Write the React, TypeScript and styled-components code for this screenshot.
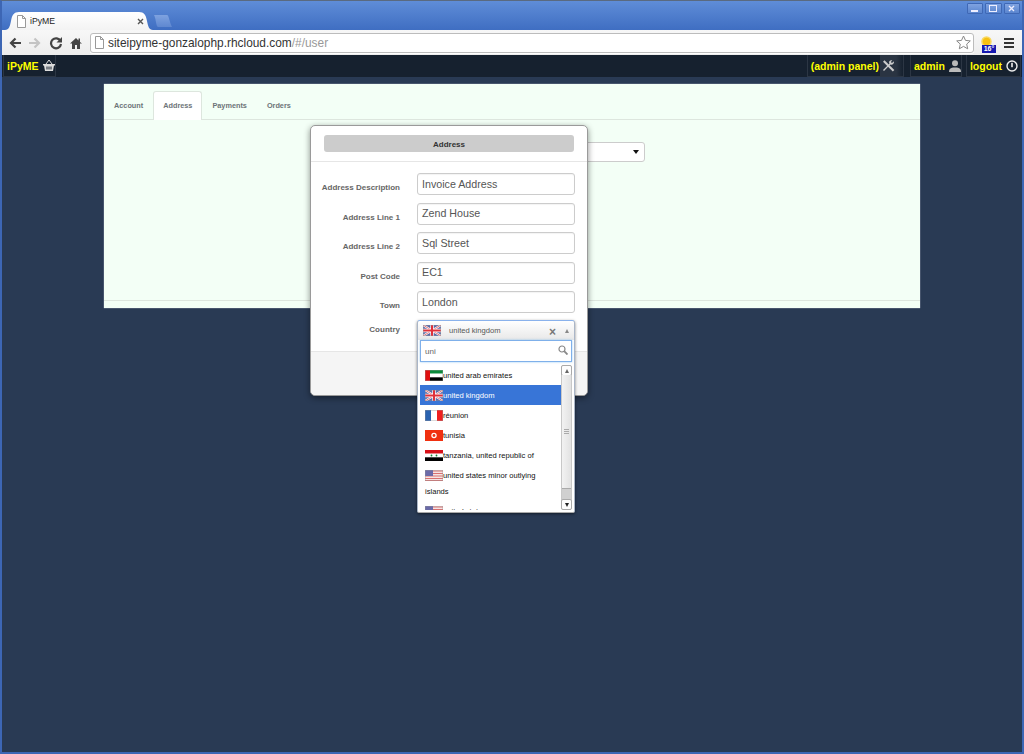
import React from "react";
import styled, { createGlobalStyle } from "styled-components";

const Global = createGlobalStyle`
  html, body { margin: 0; padding: 0; background: #293a54; }
  body { font-family: "Liberation Sans", Arial, sans-serif; overflow: hidden; }
  * { box-sizing: border-box; }
`;

const Win = styled.div`
  position: relative; width: 1024px; height: 754px; display: flex; flex-direction: column;
  background: #293a54; border-style: solid; border-color: #5a6a80 #3d66b4 #3d66b4 #3d66b4; border-width: 1px 2px 2px 2px; overflow: hidden;
`;
const TitleBar = styled.div`
  height: 29px; flex: none; display: flex; align-items: flex-end; margin: 0 -2px;
  padding-left: 5px; background: linear-gradient(#5f8dd8, #3f6ec2);
  position: relative;
`;
const Tab = styled.div`
  width: 148px; height: 18px; background: linear-gradient(#ffffff, #f3f3f3);
  clip-path: path("M0 18 C4 18 5 14 6 9 C7 3 9 0 14 0 L134 0 C139 0 141 3 142 9 C143 14 144 18 148 18 Z");
  display: flex; align-items: center; padding: 0 9px 0 11px; font-size: 8.7px; color: #222; gap: 3px;
`;
const TabTitle = styled.span` flex: 1; `;
const NewTab = styled.div`
  width: 18px; height: 12px; margin: 0 0 3px 1px; background: linear-gradient(#7ea2e0, #5f88d0);
  clip-path: path("M0 0 L13 0 C15 0 15 6 18 12 L4 12 C2 12 2 3 0 0 Z");
`;
const WinControls = styled.div`
  position: absolute; top: 2px; right: 4px; display: flex; gap: 2px;
`;
const WinButton = styled.div`
  width: 16.5px; height: 11px; background: linear-gradient(#7fa2e0, #5a85cf); border: 1px solid #3f68b5; border-radius: 1px;
  display: flex; align-items: center; justify-content: center;
`;
const Toolbar = styled.div`
  height: 25px; flex: none; margin: 0 -2px; background: linear-gradient(#f7f7f7, #ededed); display: flex; align-items: center; padding: 0 5px 0 5px;
`;
const NavIcon = styled.div`
  width: 20px; height: 20px; display: flex; align-items: center; justify-content: center;
`;
const ReloadIcon = styled(NavIcon)` margin-left: 1px; `;
const Omni = styled.div`
  flex: 1; height: 20px; margin-left: 4px; background: #fff; border: 1px solid #bcbcbc; border-radius: 3px; display: flex; align-items: center; padding: 0 2px 0 3px; font-size: 11.9px; color: #333; gap: 3px; min-width: 0; box-shadow: 0 1px 0 #fff;
`;
const UrlGray = styled.span` color: #999; `;
const UrlText = styled.span` flex: 1; `;
const Ext = styled.div<{ $ml: number }>`
  width: 20px; height: 20px; margin-left: ${p => p.$ml}px; display: flex; align-items: center; justify-content: center; position: relative;
`;
const Badge = styled.span`
  position: absolute; left: 5px; bottom: 0; width: 14px; height: 8px; background: #1418b0; color: #fff; font-size: 7px; line-height: 8px; font-weight: bold; text-align: center;
`;
const Nav = styled.div`
  height: 22px; flex: none; margin: 0 -2px; background: #16212f; display: flex; align-items: stretch; padding: 0 3px 0 3px;
`;
const NavItem = styled.div<{ $ml?: number; $pr?: number; $pl?: number }>`
  display: flex; align-items: center; gap: 4px; padding: 0 ${p => p.$pr ?? 2}px 0 ${p => p.$pl ?? 3}px; margin-left: ${p => p.$ml ?? 0}px;
  border-left: 1px solid #2c3644; border-right: 1px solid #2c3644;
  color: #ffff00; font-size: 10.5px; font-weight: bold; white-space: nowrap; height: 22px;
  border-bottom: 1px solid #2c3644;
`;
const HoverIcon = styled.span`
  display: flex; align-items: center; padding-left: 2px; background: linear-gradient(90deg, #2a3442 70%, #16212f); height: 100%; width: 23px; margin: 0 -2px 0 -3px;
`;
const Spacer = styled.div` flex: 1; `;
const Page = styled.div`
  flex: 1; padding: 7px 102px 0 102px; min-height: 0;
`;
const Card = styled.div`
  width: 816px; height: 224px; background: #f3fff6; display: flex; flex-direction: column; box-shadow: 0 0 1px #dde;
`;
const Tabs = styled.div`
  height: 29px; margin-top: 7px; display: flex; border-bottom: 1px solid #dde6de; flex: none;
`;
const TabLink = styled.div<{ $active?: boolean }>`
  height: ${p => (p.$active ? 29 : 28)}px; padding: ${p => (p.$active ? 0 : 1)}px ${p => (p.$active ? 9 : 10)}px 0; font-size: 7.3px; font-weight: bold; color: #6d7478; display: flex; align-items: center; line-height: 1;
  ${p => p.$active && `background:#fff; border:1px solid #dde6de; border-bottom:none; border-radius:3px 3px 0 0;`}
`;
const CardBody = styled.div`
  flex: 1; position: relative; padding: 22px 0 0 246px;
`;
const BehindSelect = styled.div`
  width: 295px; height: 20px; background: #fff; border: 1px solid #ccc; border-radius: 3px; display: flex; align-items: center; justify-content: flex-end; padding-right: 5px;
`;
const Arrow = styled.span`
  width: 0; height: 0; border-left: 3px solid transparent; border-right: 3px solid transparent; border-top: 4px solid #111;
`;
const CardFooter = styled.div`
  height: 8px; flex: none; border-top: 1px solid #dde6de;
`;
const Modal = styled.div`
  position: absolute; left: 310px; top: 125px; width: 278px; height: 271px; background: #fff; border: 1px solid #9a9a9a; border-radius: 5px;
  box-shadow: 0 2px 6px rgba(0,0,0,.45); display: flex; flex-direction: column;
`;
const ModalHead = styled.div`
  height: 36px; flex: none; padding: 9px 13px 0 13px; border-bottom: 1px solid #e6e6e6;
`;
const ModalTitle = styled.div`
  height: 17px; padding-top: 1px; background: #cccccc; border-radius: 3px; font-size: 8px; font-weight: bold; color: #333; display: flex; align-items: center; justify-content: center;
`;
const Form = styled.div`
  flex: 1; padding-top: 11.2px; display: flex; flex-direction: column; gap: 7.5px;
`;
const Row = styled.div`
  display: grid; grid-template-columns: 89px 158px; column-gap: 17px; height: 22px; align-items: center;
`;
const Label = styled.div`
  font-size: 8px; font-weight: bold; color: #666; text-align: right; padding-top: 7px; white-space: nowrap;
`;
const CountryLabel = styled(Label)` padding-top: 0; margin-top: -5px; `;
const Input = styled.div`
  height: 22px; border: 1px solid #ccc; border-radius: 3px; background: #fff; color: #555; font-size: 10.7px; display: flex; align-items: center; padding-left: 4px; padding-bottom: 0.4px;
  box-shadow: inset 0 1px 1px rgba(0,0,0,.05);
`;
const ModalFooter = styled.div`
  height: 44px; flex: none; background: #f5f5f5; border-top: 1px solid #e6e6e6; border-radius: 0 0 5px 5px;
`;
const Chosen = styled.div`
  position: absolute; left: 417px; top: 320px; width: 158px; height: 193px; background: #fff; border: 1px solid #8ab2ec; border-radius: 3px 3px 2px 2px; box-shadow: 0 1px 3px rgba(0,0,0,.5);
  display: flex; flex-direction: column;
  border-bottom-color: #aaa; border-left-color: #aab6c8; border-right-color: #aab6c8;
`;
const ChosenHead = styled.div`
  height: 19px; flex: none; background: linear-gradient(#fff, #e8e8e8); display: flex; align-items: center; padding: 0 5px 0 5px; gap: 6px; font-size: 7.6px; color: #555; border-radius: 3px 3px 0 0;
`;
const ChosenText = styled.span` flex: 1; margin-left: 2px; `;
const Caret = styled.span`
  width: 0; height: 0; border-left: 2.5px solid transparent; border-right: 2.5px solid transparent; border-bottom: 4px solid #888;
`;
const ClearX = styled.span` font-size: 12px; font-weight: bold; color: #777; margin-right: 3px; line-height: 1; margin-top: 2px; `;
const Search = styled.div`
  height: 22px; flex: none; margin: 0 2px; border: 1px solid #7fb0ea; box-shadow: 0 0 2px rgba(82,168,236,.6); display: flex; align-items: center; justify-content: space-between; padding: 0 3px 0 4px; font-size: 8px; color: #666; background: #fff;
`;
const SearchIcon = styled.span` display: flex; margin-top: -3px; `;
const ListWrap = styled.div`
  flex: 1; min-height: 0; display: flex; margin: 3px 2px 2px 2px; overflow: hidden;
`;
const List = styled.div`
  flex: 1; min-width: 0; overflow: hidden;
`;
const Item = styled.div<{ $sel?: boolean }>`
  padding: 3px 5px 1px; min-height: 20px; line-height: 16px; font-size: 7.6px; color: ${p => (p.$sel ? "#fff" : "#111")}; background: ${p => (p.$sel ? "#3875d7" : "transparent")};
`;
const FlagBox = styled.svg`
  width: 18px; height: 11px; vertical-align: -3px;
`;
const Scroll = styled.div`
  width: 11px; flex: none; background: #e8e8e8; border: 1px solid #c8c8c8; display: flex; flex-direction: column; border-radius: 2px;
`;
const ScrollBtn = styled.div`
  height: 11px; flex: none; background: #fdfdfd; border: 1px solid #aaa; border-radius: 2px; display: flex; align-items: center; justify-content: center; margin: -1px;
`;
const ScrollTrack = styled.div`
  flex: 1; display: flex; flex-direction: column; justify-content: center; align-items: center; background: linear-gradient(90deg,#f2f2f2,#e2e2e2); border-bottom: 1px solid #aaa;
`;
const ScrollRest = styled.div`
  height: 11px; flex: none; background: #d0d0d0;
`;
const Grip = styled.div`
  width: 5px; height: 5px; border-top: 1px solid #aaa; border-bottom: 1px solid #aaa; position: relative;
  &::after { content: ""; position: absolute; left: 0; right: 0; top: 1px; height: 1px; background: #aaa; }
`;
const UpArrow = styled(Caret)` border-bottom-color: #666; `;
const DownArrow = styled(Arrow)` border-left-width: 2.5px; border-right-width: 2.5px; border-top-color: #222; `;

const Edge = () => <rect x=".25" y=".25" width="17.5" height="10.5" fill="none" stroke="#999" strokeWidth=".5" opacity=".7" />;

const Uk = () => (
  <FlagBox viewBox="0 0 18 11">
    <rect width="18" height="11" fill="#5a6aa8" />
    <path d="M0 0L18 11M18 0L0 11" stroke="#fff" strokeWidth="2" />
    <path d="M0 0L18 11M18 0L0 11" stroke="#d8505a" strokeWidth=".8" />
    <path d="M9 0V11M0 5.5H18" stroke="#fff" strokeWidth="3.4" />
    <path d="M9 0V11M0 5.5H18" stroke="#e0303a" strokeWidth="2" />
    <Edge />
  </FlagBox>
);
const Uae = () => (
  <FlagBox viewBox="0 0 18 11">
    <rect width="18" height="3.7" fill="#0a8a3a" />
    <rect y="3.7" width="18" height="3.6" fill="#fff" />
    <rect y="7.3" width="18" height="3.7" fill="#000" />
    <rect width="5" height="11" fill="#e01010" />
    <Edge />
  </FlagBox>
);
const Fr = () => (
  <FlagBox viewBox="0 0 18 11">
    <rect width="6" height="11" fill="#2a62b0" />
    <rect x="6" width="6" height="11" fill="#fff" />
    <rect x="12" width="6" height="11" fill="#f02020" />
    <Edge />
  </FlagBox>
);
const Tn = () => (
  <FlagBox viewBox="0 0 18 11">
    <rect width="18" height="11" fill="#f03010" />
    <circle cx="9" cy="5.5" r="2.7" fill="#fff" />
    <circle cx="9" cy="5.5" r="1.4" fill="#f03010" />
  </FlagBox>
);
const Tz = () => (
  <FlagBox viewBox="0 0 18 11">
    <rect width="18" height="3.7" fill="#d81018" />
    <rect y="3.7" width="18" height="3.6" fill="#fff" />
    <rect y="7.3" width="18" height="3.7" fill="#000" />
    <circle cx="6.5" cy="5.5" r=".9" fill="#108030" />
    <circle cx="11.5" cy="5.5" r=".9" fill="#108030" />
  </FlagBox>
);
const Us = () => (
  <FlagBox viewBox="0 0 18 11">
    <rect width="18" height="11" fill="#f4e4e4" />
    <path d="M0 1H18M0 3.5H18M0 6H18M0 8.5H18M0 10.5H18" stroke="#d87070" strokeWidth="1" />
    <rect width="8" height="6" fill="#6a6aa8" />
    <Edge />
  </FlagBox>
);

const Back = () => (
  <svg width="14" height="14" viewBox="0 0 14 14"><path d="M13 7H4M7.5 2.5L3 7l4.5 4.5" fill="none" stroke="#444" strokeWidth="2.2" /></svg>
);
const Fwd = () => (
  <svg width="14" height="14" viewBox="0 0 14 14"><path d="M1 7h9M6.5 2.5L11 7l-4.5 4.5" fill="none" stroke="#c4c4c4" strokeWidth="2.2" /></svg>
);
const Reload = () => (
  <svg width="14" height="14" viewBox="0 0 14 14"><path d="M11.5 5A5 5 0 1 0 12 8" fill="none" stroke="#444" strokeWidth="2.2" /><path d="M13 1v5.5H7.5z" fill="#444" /></svg>
);
const Home = () => (
  <svg width="14" height="14" viewBox="0 0 14 14"><path d="M7 2L1 7.5h2V13h3V9h2v4h3V7.5h2L11 6V2.5H9.5V4.5z" fill="#444" /></svg>
);
const Page16 = () => (
  <svg width="11" height="13" viewBox="0 0 11 13"><path d="M1.5.5h5l3 3v9h-8z M6.5.5v3h3" fill="#fff" stroke="#999" /></svg>
);
const Star = () => (
  <svg width="15" height="15" viewBox="0 0 15 15"><path d="M7.5 1l2 4.4 4.8.5-3.6 3.2 1 4.7-4.2-2.4-4.2 2.4 1-4.7L.7 5.9l4.8-.5z" fill="#fff" stroke="#888" /></svg>
);
const Basket = () => (
  <svg width="12" height="13" viewBox="0 0 12 13"><path d="M3 5L6 1l3 4" fill="none" stroke="#ddd" /><path d="M0 5h12v1.5h-1L10 12H2L1 6.5H0z" fill="#ddd" /><path d="M4 7.5v3M6 7.5v3M8 7.5v3" stroke="#16212f" /></svg>
);
const Tools = () => (
  <svg width="13" height="13" viewBox="0 0 13 13"><path d="M2.5 1.2l9.8 9.8-1.5 1.5L1 2.7z" fill="#ccc" /><path d="M9 1.2a2.6 2.6 0 0 0-1.6 3.5L1 11l1 1 6.3-6.4a2.6 2.6 0 0 0 3.5-3.3L10 4 8.8 2.9l1.6-1.7z" fill="#ccc" /></svg>
);
const User = () => (
  <svg width="12" height="12" viewBox="0 0 12 12"><circle cx="6" cy="3.2" r="3" fill="#bbb" /><path d="M0 12c0-3 1.5-4 4-4.500h4c2.500.5 4 1.500 4 4.500z" fill="#bbb" /></svg>
);
const Power = () => (
  <svg width="12" height="12" viewBox="0 0 12 12"><circle cx="6" cy="6" r="5" fill="none" stroke="#eee" strokeWidth="1.4" /><rect x="5.2" y="2.8" width="1.6" height="4.4" fill="#eee" /></svg>
);
const Magnifier = () => (
  <svg width="10" height="10" viewBox="0 0 10 10"><circle cx="4" cy="4" r="3" fill="none" stroke="#888" strokeWidth="1.2" /><path d="M6.2 6.2L9.5 9.5" stroke="#888" strokeWidth="1.8" /></svg>
);

export default function App() {
  return (
    <>
      <Global />
      <Win>
        <TitleBar>
          <Tab>
            <Page16 />
            <TabTitle>iPyME</TabTitle>
            <svg width="7" height="7" viewBox="0 0 7 7"><path d="M1 1l5 5M6 1L1 6" stroke="#555" strokeWidth="1.4" /></svg>
          </Tab>
          <NewTab />
          <WinControls>
            <WinButton><svg width="7" height="7" viewBox="0 0 7 7"><rect y="5" width="7" height="2" fill="#eef" /></svg></WinButton>
            <WinButton><svg width="8" height="7" viewBox="0 0 8 7"><rect x=".5" y=".5" width="7" height="6" fill="none" stroke="#eef" /></svg></WinButton>
            <WinButton><svg width="7" height="7" viewBox="0 0 7 7"><path d="M1 1l5 5M6 1L1 6" stroke="#eef" strokeWidth="1.4" /></svg></WinButton>
          </WinControls>
        </TitleBar>
        <Toolbar>
          <NavIcon><Back /></NavIcon>
          <NavIcon><Fwd /></NavIcon>
          <ReloadIcon><Reload /></ReloadIcon>
          <NavIcon><Home /></NavIcon>
          <Omni>
            <Page16 />
            <UrlText>siteipyme-gonzalophp.rhcloud.com<UrlGray>/#/user</UrlGray></UrlText>
            <Star />
          </Omni>
          <Ext $ml={3}>
            <svg width="14" height="14" viewBox="0 0 14 14"><circle cx="6.5" cy="5.5" r="4.5" fill="#f6c012" stroke="#f8d860" strokeWidth="1.5" /></svg>
            <Badge>16°</Badge>
          </Ext>
          <Ext $ml={2}>
            <svg width="10" height="10" viewBox="0 0 10 10"><path d="M0 1h10M0 5h10M0 9h10" stroke="#333" strokeWidth="2" /></svg>
          </Ext>
        </Toolbar>
        <Nav>
          <NavItem $pr={0}>iPyME <Basket /></NavItem>
          <Spacer />
          <NavItem>(admin panel) <HoverIcon><Tools /></HoverIcon></NavItem>
          <NavItem $ml={6} $pr={0}>admin <User /></NavItem>
          <NavItem $ml={4}>logout <Power /></NavItem>
        </Nav>
        <Page>
          <Card>
            <Tabs>
              <TabLink>Account</TabLink>
              <TabLink $active>Address</TabLink>
              <TabLink>Payments</TabLink>
              <TabLink>Orders</TabLink>
            </Tabs>
            <CardBody>
              <BehindSelect><Arrow /></BehindSelect>
            </CardBody>
            <CardFooter />
          </Card>
        </Page>
      </Win>
      <Modal>
        <ModalHead><ModalTitle>Address</ModalTitle></ModalHead>
        <Form>
          <Row><Label>Address Description</Label><Input>Invoice Address</Input></Row>
          <Row><Label>Address Line 1</Label><Input>Zend House</Input></Row>
          <Row><Label>Address Line 2</Label><Input>Sql Street</Input></Row>
          <Row><Label>Post Code</Label><Input>EC1</Input></Row>
          <Row><Label>Town</Label><Input>London</Input></Row>
          <Row><CountryLabel>Country</CountryLabel><div /></Row>
        </Form>
        <ModalFooter />
      </Modal>
      <Chosen>
        <ChosenHead>
          <Uk />
          <ChosenText>united kingdom</ChosenText>
          <ClearX>×</ClearX>
          <Caret />
        </ChosenHead>
        <Search>uni<SearchIcon><Magnifier /></SearchIcon></Search>
        <ListWrap>
          <List>
            <Item><Uae />united arab emirates</Item>
            <Item $sel><Uk />united kingdom</Item>
            <Item><Fr />réunion</Item>
            <Item><Tn />tunisia</Item>
            <Item><Tz />tanzania, united republic of</Item>
            <Item><Us />united states minor outlying islands</Item>
            <Item><Us />united states</Item>
          </List>
          <Scroll>
            <ScrollBtn><UpArrow /></ScrollBtn>
            <ScrollTrack><Grip /></ScrollTrack>
            <ScrollRest />
            <ScrollBtn><DownArrow /></ScrollBtn>
          </Scroll>
        </ListWrap>
      </Chosen>
    </>
  );
}
